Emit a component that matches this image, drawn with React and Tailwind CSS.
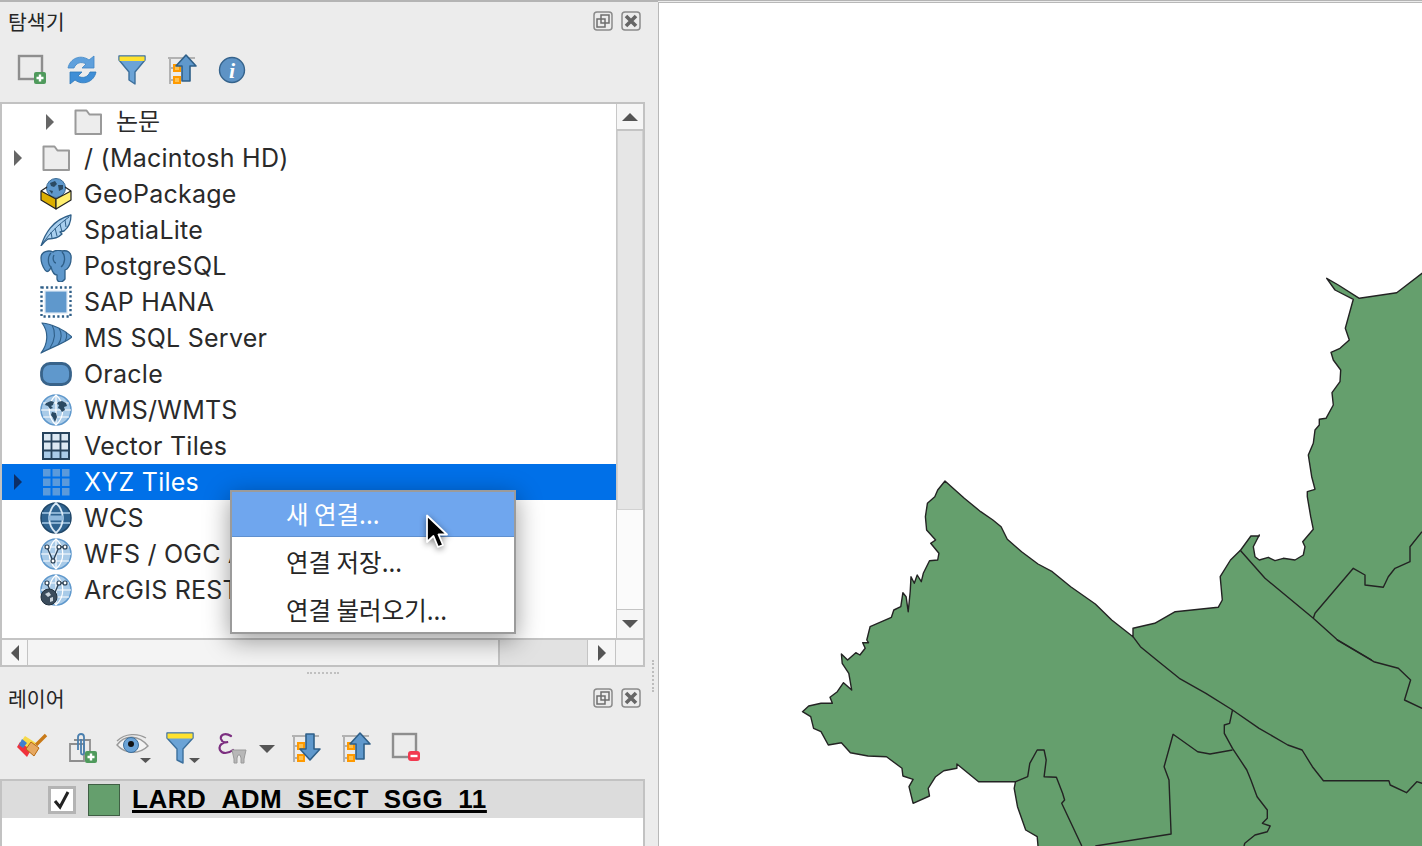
import React from 'react'

const BLUE = '#5f98cc'
const DARK = '#2f5f88'

// map outline was read off two zoomed crops, so points come in crop coordinates
const z1 = s => s.split(' ').map(p => { const [x, y] = p.split(',').map(Number); return `${(780 + x / 2.442).toFixed(1)},${(460 + y / 3).toFixed(1)}` }).join(' ')
const z2 = s => s.split(' ').map(p => { const [x, y] = p.split(',').map(Number); return `${(1220 + x / 3).toFixed(1)},${(260 + y / 3).toFixed(1)}` }).join(' ')

const outerLeft = '630,1158 628,1130 600,1110 580,1040 572,985 575,965 485,965 432,912 432,925 400,932 380,950 362,985 365,1008 325,1030 315,980 325,958 300,948 298,925 260,890 215,888 172,878 150,848 118,855 100,815 82,805 75,770 55,755 70,738 100,730 128,730 122,712 140,695 155,668 175,690 168,640 152,610 150,582 165,600 185,578 195,585 208,565 202,548 216,548 212,540 220,500 272,472 278,450 295,440 300,398 308,410 313,455 318,395 320,350 328,370 335,345 345,365 350,340 365,302 385,300 388,280 368,250 380,240 358,210 355,170 360,130 378,110 385,90 403,63 450,115 490,155 520,180 540,200 555,238 590,275 630,312 665,335 710,380 770,432 810,480 862,530 862,505 915,490 965,455 1070,442 1080,420 1075,350 1100,300 1125,270 1150,228 1170,228'
const outerRight = '118,825 100,860 105,890 118,900 145,892 165,902 190,895 225,900 250,885 255,860 248,845 280,808 272,770 262,710 262,695 285,688 275,650 265,585 280,550 285,510 298,495 298,478 318,475 340,435 336,398 360,365 362,330 340,300 333,277 360,265 388,240 376,205 400,118 345,90 320,55 355,75 418,115 530,98 606,40'
const mapFill = `1038,870 ${z1(outerLeft)} ${z2(outerRight)} 1440,260 1440,870`
const mapLines = [
  z1('862,530 880,560 925,605 975,655 1040,700 1105,750 1170,805 1240,855 1275,870 1300,920 1327,962 1487,962 1490,975 1530,998 1555,965 1568,970'),
  z1('1105,750 1098,790 1085,795 1085,820 1105,865 1140,930 1150,960 1165,1010 1190,1050 1190,1075 1178,1090 1197,1098 1190,1115 1160,1125 1135,1150 1133,1158'),
  z1('1105,870 1050,882 1020,875 960,823 938,920 950,960 955,1122 770,1158'),
  z1('575,965 605,950 610,910 628,870 645,870 650,900 645,950 675,952 690,1000 695,1020 688,1030 737,1158'),
  z2('60,870 135,955 280,1075 350,1138 455,1200'),
  z1('1360,540 1450,605 1510,625 1540,660 1525,720 1568,745'),
  z2('280,1075 285,1060 400,925 435,945 435,975 490,982 505,950 525,925 570,905 570,860 606,815'),
]

function MapCanvas() {
  return (
    <svg className="w-full h-full block" viewBox="659 3 763 843" preserveAspectRatio="xMinYMin slice">
      <polygon points={mapFill} fill="#659f6d" stroke="#232323" strokeWidth="1.4" strokeLinejoin="round" />
      {mapLines.map((p, i) => <polyline key={i} points={p} fill="none" stroke="#232323" strokeWidth="1.4" strokeLinejoin="round" />)}
    </svg>
  )
}

function Folder() {
  return (
    <svg width="32" height="32" viewBox="0 0 32 32">
      <path d="M3.500 4.500h11l3 4h11.500v19.500h-25.500z" fill="#ededed" stroke="#9a9a9a" strokeWidth="2" strokeLinejoin="round" />
    </svg>
  )
}

function Globe({ dark, land = true, children }) {
  return (
    <svg width="32" height="32" viewBox="0 0 32 32">
      <circle cx="16" cy="16" r="15" fill={dark ? '#2f6390' : '#a9cbe8'} stroke={dark ? '#1f4668' : '#5f98cc'} strokeWidth="1.500" />
      {dark ? (
        <g fill="none">
          <path d="M2 11h28M2 21h28" stroke="#a9cbe8" strokeWidth="1.500" />
          <path d="M16 1c-9 8-9 22 0 30c9-8 9-22 0-30z" stroke="#d8e8f5" strokeWidth="1.800" />
          <path d="M8.500 13.500h15v5h-15z" fill="#8fb8dc" />
        </g>
      ) : (
        <g fill="none" stroke="#ffffff" strokeWidth="1.200">
          <path d="M16 1c-9 8-9 22 0 30c9-8 9-22 0-30z" />
          <path d="M1 16h30M3 9h26M3 23h26M16 1v30" />
        </g>
      )}
      {land && <path d="M6 9l5-2l3 1l-1 3l-2 1l2 2l-3 1l-2-3l-3-1zM18 8l4-1l4 2l1 3l-3 1l1 3l-3 2l-2-3l-2-1l1-3l-2-1zM12 18l4 1l1 4l-2 5l-2-4l-2-3z" fill="#2b4a63" />}
      {children}
    </svg>
  )
}

function GeoPackage() {
  return (
    <svg width="32" height="32" viewBox="0 0 32 32">
      <circle cx="16" cy="10" r="9.500" fill="#5f98cc" stroke="#3a6a94" />
      <path d="M10 5l5-2l2 3l-3 3l-3-1zM18 7l5 0l0 4l-4 2zM9 12l4 1l-1 3z" fill="#2b4a63" />
      <path d="M1 13l15 8v10l-15-9z" fill="#dcae00" stroke="#222" strokeWidth="1.200" strokeLinejoin="round" />
      <path d="M31 13l-15 8v10l15-9z" fill="#ffef70" stroke="#222" strokeWidth="1.200" strokeLinejoin="round" />
      <path d="M1 13l6-4M31 13l-6-4" stroke="#222" strokeWidth="1.200" />
    </svg>
  )
}

function Feather() {
  return (
    <svg width="32" height="32" viewBox="0 0 32 32">
      <path d="M1 32C5 20 12 6 31 1C31 8 28 14 24 17L20 18L22 20C18 24 13 25 8 25C5 27 3 29 1 32z" fill="#a9cfee" stroke="#2f5f88" strokeWidth="1.300" strokeLinejoin="round" />
      <path d="M3 29C10 19 18 11 29 3M11 18l1 6M15 14l2 8M20 10l2 8M25 6l1 7" fill="none" stroke="#2f5f88" strokeWidth="1" />
    </svg>
  )
}

function Elephant() {
  return (
    <svg width="32" height="32" viewBox="0 0 32 32">
      <path d="M1 8C1 1 9 0 13 2C15 0 20 0 22 1C27 0 32 2 31 9C31 13 29 17 27 19L25 20V29C22 33 18 33 17 29V25C14 25 12 21 11 17C10 21 7 23 5 20C3 17 1 13 1 8z" fill={BLUE} stroke={DARK} strokeWidth="1.300" strokeLinejoin="round" />
      <path d="M11 3C7 7 8 15 11 17M22 2C26 6 25 14 21 17M14 5C12 9 14 13 16 13" fill="none" stroke={DARK} strokeWidth="1.300" />
    </svg>
  )
}

function SapHana() {
  return (
    <svg width="32" height="32" viewBox="0 0 32 32">
      <rect x="1.500" y="1.500" width="29" height="29" fill="none" stroke="#2f5f88" strokeWidth="2.400" strokeDasharray="2.200 2.400" />
      <rect x="5" y="5" width="22" height="22" fill="#5f98cc" stroke="#d9e7f3" strokeWidth="1.200" />
    </svg>
  )
}

function MsSql() {
  return (
    <svg width="32" height="32" viewBox="0 0 32 32">
      <path d="M2 1C12 2 25 8 32 15C25 21 10 26 1 31C8 22 9 10 2 1z" fill={BLUE} stroke={DARK} strokeWidth="1.200" strokeLinejoin="round" />
      <path d="M12 3C16 10 15 18 10 26M19 6C22 11 22 17 18 23M26 10C27 13 27 16 25 19" fill="none" stroke={DARK} strokeWidth="1.100" />
    </svg>
  )
}

function Oracle() {
  return (
    <svg width="32" height="32" viewBox="0 0 32 32">
      <rect x="1.500" y="5.500" width="29" height="21" rx="8.500" fill={BLUE} stroke="#38638a" strokeWidth="2.800" />
    </svg>
  )
}

function VectorTiles() {
  return (
    <svg width="32" height="32" viewBox="0 0 32 32">
      <rect x="3" y="3" width="26" height="26" fill="#dce8f2" stroke="#27435c" strokeWidth="2" />
      <path d="M4 20h24v8H4z" fill="#a9cbe8" />
      <path d="M11.500 3v26M20.500 3v26M3 11.500h26M3 20.500h26" stroke="#27435c" strokeWidth="1.800" />
    </svg>
  )
}

function XyzTiles() {
  const cells = [3, 12.5, 22]
  return (
    <svg width="32" height="32" viewBox="0 0 32 32">
      {cells.map(y => cells.map(x => <rect key={`${x}-${y}`} x={x} y={y} width="7.500" height="7.500" fill="#5b9adb" />))}
    </svg>
  )
}

function Wfs({ arc }) {
  return (
    <Globe land={false}>
      <path d="M7 9l6 14l6-14l6 0" fill="none" stroke="#2a3f52" strokeWidth="1.300" />
      {[[7, 9], [13, 23], [19, 9], [25, 9]].map(([x, y]) => <circle key={x} cx={x} cy={y} r="2" fill="#fff" stroke="#2a3f52" strokeWidth="1.200" />)}
      {arc && <circle cx="9" cy="23" r="8" fill="#3b4c5c" stroke="#20303e" />}
      {arc && <path d="M5 20l4-2l2 3l-3 2zM10 24l3-1l0 4l-3 1z" fill="#ccd6de" />}
    </Globe>
  )
}

function AddPanel() {
  return (
    <svg width="32" height="32" viewBox="0 0 32 32">
      <rect x="3" y="2" width="23" height="23" fill="none" stroke="#8e8e8e" strokeWidth="2.400" />
      <rect x="18" y="18" width="12" height="12" rx="2" fill="#4f9a5c" />
      <path d="M24 20.500v7M20.500 24h7" stroke="#fff" strokeWidth="2.400" />
    </svg>
  )
}

function RemovePanel() {
  return (
    <svg width="32" height="32" viewBox="0 0 32 32">
      <rect x="3" y="2" width="23" height="23" fill="none" stroke="#8e8e8e" strokeWidth="2.400" />
      <rect x="18" y="19" width="12" height="10" rx="3" fill="#f2394f" />
      <path d="M20.500 24h7" stroke="#fff" strokeWidth="2.400" />
    </svg>
  )
}

function Refresh() {
  return (
    <svg width="32" height="32" viewBox="0 0 32 32">
      <path d="M2 14C4 4 15 0 23 6L28 2V14H16L20 10C15 7 10 9 8 14z" fill="#5fa0dc" stroke="#3f86c6" strokeWidth="0.800" strokeLinejoin="round" />
      <path d="M30 18C28 28 17 32 9 26L4 30V18H16L12 22C17 25 22 23 24 18z" fill="#3f8ed6" stroke="#2f78ba" strokeWidth="0.800" strokeLinejoin="round" />
    </svg>
  )
}

function Funnel() {
  return (
    <svg width="32" height="32" viewBox="0 0 32 32">
      <path d="M3 2h26v4L19 18v12l-6-4v-8L3 6z" fill="#6ba3d6" stroke="#3c6f9c" strokeWidth="1.400" strokeLinejoin="round" />
      <rect x="3.500" y="2.500" width="25" height="4.500" fill="#ffe22e" />
    </svg>
  )
}

function TreeArrow({ up }) {
  return (
    <svg width="32" height="32" viewBox="0 0 32 32">
      <path d="M2 4h27M4 4v26" stroke="#b2b2b2" strokeWidth="2" fill="none" />
      <path d="M4 14h6M4 26h6" stroke="#b2b2b2" strokeWidth="2" fill="none" />
      <rect x="8" y="11" width="6" height="6" fill="#ffc04d" stroke="#ff9a00" strokeWidth="2" />
      <rect x="8" y="23" width="6" height="6" fill="#ffc04d" stroke="#ff9a00" strokeWidth="2" />
      {up ? (
        <path d="M20 1L30 12H24V27H16V12H10z" fill="#5f98cc" stroke={DARK} strokeWidth="1.600" strokeLinejoin="round" />
      ) : (
        <path d="M20 28L30 17H24V2H16V17H10z" fill="#5f98cc" stroke={DARK} strokeWidth="1.600" strokeLinejoin="round" />
      )}
    </svg>
  )
}

function Info() {
  return (
    <svg width="32" height="32" viewBox="0 0 32 32">
      <circle cx="16" cy="16" r="12.500" fill="#5e93c5" stroke="#35638c" strokeWidth="1.400" />
      <text x="16" y="24" textAnchor="middle" fill="#fff" fontFamily="'Liberation Serif', serif" fontStyle="italic" fontWeight="700" fontSize="22">i</text>
    </svg>
  )
}

function Brush() {
  return (
    <svg width="32" height="32" viewBox="0 0 32 32">
      <path d="M4 11L9 4L20 11L13 19z" fill="#f6d94a" />
      <path d="M1 15l3-5l11 8l-4 7z" fill="#f0323c" />
      <path d="M3 13l3-6l5 4l-4 5z" fill="#3f7fd0" />
      <path d="M10 17l5-7l8 6l-5 8z" fill="#e6a860" stroke="#b8690f" strokeWidth="1" />
      <path d="M20 13L30 3" stroke="#c97a18" strokeWidth="3.400" />
    </svg>
  )
}

function AddGroup() {
  return (
    <svg width="32" height="32" viewBox="0 0 32 32">
      <path d="M4 12h14v17H4z" fill="none" stroke="#8e8e8e" strokeWidth="1.800" />
      <path d="M8 8h16v16" fill="none" stroke="#8e8e8e" strokeWidth="1.800" />
      <path d="M12 18V5c0-4 6-4 6 0v16c0 2-3 2-3 0V7" fill="none" stroke="#4a7fae" strokeWidth="1.800" />
      <rect x="19" y="19" width="12" height="12" rx="2" fill="#4f9a5c" />
      <path d="M25 21.500v7M21.500 25h7" stroke="#fff" strokeWidth="2.400" />
    </svg>
  )
}

function Eye() {
  return (
    <svg width="36" height="32" viewBox="0 0 36 32">
      <path d="M1 13C9 2 23 3 32 14C23 23 9 22 1 13z" fill="#f3f3f3" stroke="#9a9a9a" strokeWidth="1.400" />
      <path d="M1 9C9 1 22 1 30 6" fill="none" stroke="#9a9a9a" strokeWidth="1.300" />
      <circle cx="15" cy="13" r="7.500" fill="#6ba3d6" stroke="#3c6f9c" />
      <circle cx="15" cy="12" r="3" fill="#111" />
      <path d="M24 26h11l-5.500 5z" fill="#555" />
    </svg>
  )
}

function FunnelDrop() {
  return (
    <svg width="36" height="32" viewBox="0 0 36 32">
      <path d="M1 1h26v5L17 17v14l-6-3V17L1 6z" fill="#6ba3d6" stroke="#3c6f9c" strokeWidth="1.400" strokeLinejoin="round" />
      <rect x="1.500" y="1.500" width="25" height="5" fill="#ffe22e" />
      <path d="M23 26h11l-5.500 5z" fill="#555" />
    </svg>
  )
}

function Epsilon() {
  return (
    <svg width="58" height="32" viewBox="0 0 58 32">
      <path d="M13 4C7 0 2 3 3 7C4 10 7 11 10 10C5 10 0 13 2 18C4 22 10 22 15 18" fill="none" stroke="#7c2f80" strokeWidth="2.200" strokeLinecap="round" />
      <path d="M14 18h14l-2 9v4h-3v-5l-1-3h-2l-1 3v5h-3v-4z" fill="#b7b7b7" stroke="#9a9a9a" />
      <path d="M41 13h16l-8 8z" fill="#555" />
    </svg>
  )
}

function DockButtons() {
  return (
    <div className="flex gap-2">
      <svg width="20" height="20" viewBox="0 0 20 20">
        <rect x="1" y="1" width="18" height="18" rx="3" fill="none" stroke="#8b8b8b" strokeWidth="1.500" />
        <path d="M8 4h8v8H8zM4 8h8v8H4z" fill="none" stroke="#6e6e6e" strokeWidth="1.500" />
      </svg>
      <svg width="20" height="20" viewBox="0 0 20 20">
        <rect x="1" y="1" width="18" height="18" rx="3" fill="none" stroke="#8b8b8b" strokeWidth="1.500" />
        <path d="M5 5l10 10M15 5L5 15" stroke="#666" strokeWidth="3.600" />
      </svg>
    </div>
  )
}

const rows = [
  { label: '논문', icon: <Folder />, arrow: true, indent: true },
  { label: '/ (Macintosh HD)', icon: <Folder />, arrow: true },
  { label: 'GeoPackage', icon: <GeoPackage /> },
  { label: 'SpatiaLite', icon: <Feather /> },
  { label: 'PostgreSQL', icon: <Elephant /> },
  { label: 'SAP HANA', icon: <SapHana /> },
  { label: 'MS SQL Server', icon: <MsSql /> },
  { label: 'Oracle', icon: <Oracle /> },
  { label: 'WMS/WMTS', icon: <Globe /> },
  { label: 'Vector Tiles', icon: <VectorTiles /> },
  { label: 'XYZ Tiles', icon: <XyzTiles />, arrow: true, selected: true },
  { label: 'WCS', icon: <Globe dark land={false} /> },
  { label: 'WFS / OGC API', icon: <Wfs /> },
  { label: 'ArcGIS REST', icon: <Wfs arc /> },
]

function TreeRow({ row }) {
  return (
    <div className={`h-9 flex items-center shrink-0 ${row.selected ? 'bg-[#0070e8] text-white' : 'text-[#2a2a2a]'} ${row.indent ? 'pl-8' : ''}`}>
      <div className="w-[12px] shrink-0" />
      <div className="w-[8px] shrink-0">
        {row.arrow && <div className={`w-0 h-0 border-y-[8px] border-y-transparent border-l-[8px] ${row.selected ? 'border-l-[#0d2f66]' : 'border-l-[#666666]'}`} />}
      </div>
      <div className="ml-[18px] w-8 shrink-0">{row.icon}</div>
      <span className={`whitespace-nowrap ml-[12px] ${row.indent ? 'text-[24px]' : 'pt-[2px] tracking-[0.25px]'}`}>{row.label}</span>
    </div>
  )
}

function ScrollBtn({ children, className }) {
  return <div className={`flex items-center justify-center bg-[#f6f6f6] ${className}`}>{children}</div>
}

export default function App() {
  return (
    <div className="relative w-[1422px] h-[846px] overflow-hidden flex bg-white text-[25px] font-['Inter','Noto_Sans_CJK_KR',sans-serif]">
      <div className="w-[658px] h-full shrink-0 flex flex-col bg-[#ececec] border-t-2 border-[#b4b4b4]">
        <div className="h-[38px] pl-2 pr-[17px] flex items-center justify-between shrink-0">
          <span className="text-[20.5px] text-[#262626] font-['Noto_Sans_CJK_KR',sans-serif]">탐색기</span>
          <DockButtons />
        </div>
        <div className="h-[62px] pl-4 pb-[2px] flex items-center gap-[18px] shrink-0">
          <AddPanel /><Refresh /><Funnel /><TreeArrow up /><Info />
        </div>

        <div className="relative w-[645px] h-[565px] shrink-0 flex flex-col border-2 border-[#c2c2c2] bg-white">
          <div className="flex flex-1 min-h-0">
            <div className="w-[614px] shrink-0 flex flex-col overflow-hidden">
              {rows.map(r => <TreeRow key={r.label} row={r} />)}
            </div>
            <div className="flex-1 flex flex-col border-l border-[#c8c8c8]">
              <ScrollBtn className="h-[27px] border-b-2 border-[#c4c4c4]">
                <div className="w-0 h-0 border-x-[8px] border-x-transparent border-b-[8px] border-b-[#555555]" />
              </ScrollBtn>
              <div className="h-[379px] bg-[#e6e6e6] border-x border-b border-[#d2d2d2]" />
              <div className="flex-1 bg-[#fbfbfb]" />
              <ScrollBtn className="h-[29px] border-t border-[#c4c4c4]">
                <div className="w-0 h-0 border-x-[8px] border-x-transparent border-t-[8px] border-t-[#555555]" />
              </ScrollBtn>
            </div>
          </div>
          <div className="h-[27px] shrink-0 flex border-t-2 border-[#c4c4c4]">
            <ScrollBtn className="w-[26px] border-r border-[#c4c4c4]">
              <div className="w-0 h-0 border-y-[8px] border-y-transparent border-r-[8px] border-r-[#555555]" />
            </ScrollBtn>
            <div className="w-[472px] bg-[#f4f4f4] border-r-2 border-[#c4c4c4]" />
            <div className="w-[87px] bg-[#e2e2e2]" />
            <ScrollBtn className="w-[29px] border-x border-[#c4c4c4]">
              <div className="w-0 h-0 border-y-[8px] border-y-transparent border-l-[8px] border-l-[#555555]" />
            </ScrollBtn>
            <div className="flex-1 bg-[#f4f4f4]" />
          </div>

          {/* context menu and pointer lie over the tree */}
          <div className="absolute left-[228px] top-[386px] w-[286px] h-[144px] bg-white border-2 border-[#9b9b9b] shadow-[0_6px_24px_rgba(0,0,0,0.4)] text-[#262626] text-[24.5px] font-['Noto_Sans_CJK_KR',sans-serif]">
            <div className="h-[45px] pl-[54px] flex items-center bg-[#6fa6ee] border-b border-[#5f90cf] text-white">새 연결...</div>
            <div className="h-[50px] pl-[54px] flex items-center">연결 저장...</div>
            <div className="h-[47px] pl-[54px] flex items-center">연결 불러오기...</div>
          </div>
          <svg className="absolute left-[422px] top-[410px] drop-shadow-[0_2px_3px_rgba(0,0,0,0.45)]" width="26" height="38" viewBox="0 0 26 38">
            <path d="M3 1.500V28l6.500-6L14 33l5-2l-4.500-10.500H23z" fill="#000" stroke="#fff" strokeWidth="1.800" strokeLinejoin="round" />
          </svg>
        </div>

        <div className="h-3 pr-[12px] flex justify-center items-center shrink-0">
          <div className="w-8 border-t-2 border-dotted border-[#c0c0c0]" />
        </div>
        <div className="h-[38px] pl-2 pr-[17px] flex items-center justify-between shrink-0">
          <span className="text-[20.5px] text-[#262626] font-['Noto_Sans_CJK_KR',sans-serif]">레이어</span>
          <DockButtons />
        </div>
        <div className="h-[62px] pl-4 flex items-center shrink-0">
          <Brush />
          <div className="ml-[18px]"><AddGroup /></div>
          <div className="ml-[18px]"><Eye /></div>
          <div className="ml-[14px]"><FunnelDrop /></div>
          <div className="ml-[16px]"><Epsilon /></div>
          <div className="ml-[14px]"><TreeArrow /></div>
          <div className="ml-[18px]"><TreeArrow up /></div>
          <div className="ml-[18px]"><RemovePanel /></div>
        </div>
        <div className="w-[645px] flex-1 border-2 border-b-0 border-[#c2c2c2] bg-white">
          <div className="h-[37px] bg-[#dcdcdc] flex items-center pl-[46px]">
            <div className="w-7 h-7 bg-white border-[3px] border-[#b4b4b4] flex items-center justify-center">
              <svg width="20" height="20" viewBox="0 0 20 20">
                <path d="M3 11l5 6L16 2" fill="none" stroke="#222" strokeWidth="3" />
              </svg>
            </div>
            <div className="ml-3 w-8 h-8 bg-[#659f6d] border border-[#3f5f44]" />
            <span className="ml-3 font-['Liberation_Sans',sans-serif] text-[26px] tracking-[0.55px] font-bold text-black underline decoration-[3px] underline-offset-2">LARD_ADM_SECT_SGG_11</span>
          </div>
        </div>
      </div>

      <div className="flex-1 h-full flex flex-col bg-[#ececec] border-t border-[#b4b4b4]">
        <div className="flex-1 min-h-0 mt-px border-l border-t border-[#b8b8b8] bg-white">
          <MapCanvas />
        </div>
      </div>
      {/* splitter grip between the docks and the map */}
      <div className="absolute left-[652px] top-[660px] h-8 border-l-2 border-dotted border-[#bdbdbd]" />
    </div>
  )
}
